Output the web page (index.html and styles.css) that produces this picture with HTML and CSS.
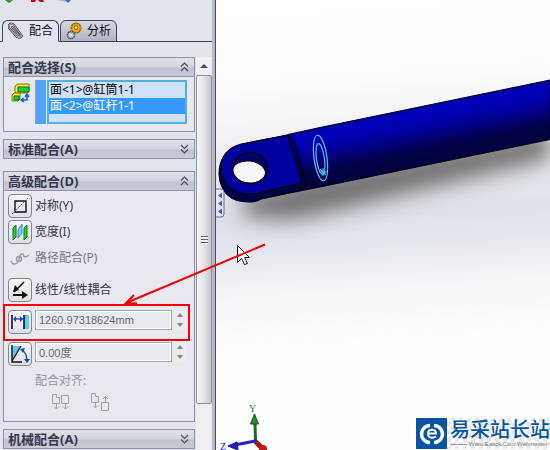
FILE: index.html
```html
<!DOCTYPE html>
<html lang="zh-CN">
<head>
<meta charset="utf-8">
<title>配合</title>
<link rel="stylesheet" href="styles.css">
</head>
<body>
<div class="app">
  <aside class="panel">
    <div class="toolbar">
      <svg width="90" height="6" viewBox="0 0 90 6" aria-hidden="true">
        <path d="M5 0h8L9 3z" fill="#555"/><path d="M6 0h6L9 2z" fill="#0c0"/>
        <path d="M31 0h5l-1 2h-4zM38 0h5l1 2h-4z" fill="#d00010"/>
        <path d="M57 0h12l-3 2z" fill="#aeb6cf"/><path d="M65 0h6l-3 3z" fill="#3867d6"/>
      </svg>
    </div>
    <div class="tabs" role="tablist">
      <button class="tab tab-active" role="tab" aria-selected="true">
        <svg width="16" height="18" viewBox="0 0 16 18" aria-hidden="true">
          <g fill="none" stroke-linecap="round"><path d="M4 9 9 15q3 2 5-1L6 3Q3 0 1 3v3l8 9M4 5l7 8" stroke="#3c3c3c" stroke-width="2"/><path d="M4 9 9 15q3 2 5-1L6 3Q3 0 1 3v3l8 9M4 5l7 8" stroke="#b8b8b8" stroke-width="1"/></g>
        </svg>配合</button>
      <button class="tab" role="tab" aria-selected="false">
        <svg width="16" height="18" viewBox="0 0 16 18" aria-hidden="true">
          <circle cx="10" cy="6" r="4.7" fill="#f5ae18" stroke="#8b5600" stroke-width="1.6"/><circle cx="10" cy="6" r="4.7" fill="none" stroke="#f5ae18" stroke-dasharray="1.500 1.500"/><circle cx="10" cy="5.500" r="1.800" fill="#fff0a0" stroke="#8b5600"/>
          <circle cx="5" cy="13" r="3.600" fill="#c4cbd8" stroke="#333c4c" stroke-width="1.500"/><circle cx="5" cy="13" r="3.600" fill="none" stroke="#c4cbd8" stroke-dasharray="1.200 1.200"/><circle cx="5" cy="13" r="1" fill="#fff"/>
        </svg>分析</button>
    </div>
    <div class="panel-body">
      <div class="sections">
        <section class="group">
          <button class="group-head" aria-expanded="true">配合选择(S)<svg class="chev" viewBox="0 0 9 10"><path d="m1 4.500 3.500-3.500L8 4.500M1 9l3.500-3.500L8 9"/></svg></button>
          <div class="select-row">
            <svg width="20" height="20" viewBox="0 0 20 20" aria-hidden="true">
              <path d="m4 3 3-2h11v7l-2 2H4z" fill="#f7e632" stroke="#887800"/><path d="M7 4h11v5H7z" fill="#20cf38" stroke="#087518"/>
              <path d="m1 12 2-2h6v6l-2 2H1z" fill="#f7e632" stroke="#887800"/><path d="M3 13h5v4H3z" fill="#20cf38" stroke="#087518"/>
              <path d="M11 17h5v-5M13 15l-3 2 3 2M14 14l2-3 2 3" fill="none" stroke="#205cd8" stroke-width="1.500"/>
            </svg>
            <div class="pick">
              <span class="pick-bar"></span>
              <ul class="list" role="listbox" aria-label="配合选择">
                <li role="option" aria-selected="false">面&lt;1&gt;@缸筒1-1</li>
                <li role="option" aria-selected="true" class="chosen">面&lt;2&gt;@缸杆1-1</li>
              </ul>
            </div>
          </div>
        </section>
        <section class="group closed">
          <button class="group-head" aria-expanded="false">标准配合(A)<svg class="chev" viewBox="0 0 9 10"><path d="m1 1 3.500 3.500L8 1M1 5.500 4.500 9 8 5.500"/></svg></button>
        </section>
        <section class="group">
          <button class="group-head" aria-expanded="true">高级配合(D)<svg class="chev" viewBox="0 0 9 10"><path d="m1 4.500 3.500-3.500L8 4.500M1 9l3.500-3.500L8 9"/></svg></button>
          <div class="mates">
            <div class="mate">
              <button class="icon-btn" id="b-sym" aria-labelledby="l-sym"><svg viewBox="0 0 20 20"><path d="M5 5h11v11H5z" fill="none" stroke="#111" stroke-width="1.400"/><path d="M2 18 18 2" stroke="#2a62d8" stroke-dasharray="2 1"/></svg></button>
              <label id="l-sym" for="b-sym">对称(Y)</label>
            </div>
            <div class="mate">
              <button class="icon-btn" id="b-wid" aria-labelledby="l-wid"><svg viewBox="0 0 20 20"><path d="m3 6 3-3v12l-3 3zM14 6l3-3v12l-3 3z" fill="#2ccc3b" stroke="#07781a"/><path d="m8 8 4-6v9l-4 5z" fill="#76d4fa" stroke="#3e83c5"/></svg></button>
              <label id="l-wid" for="b-wid">宽度(I)</label>
            </div>
            <div class="mate muted">
              <button class="icon-btn flat" id="b-path" aria-labelledby="l-path" disabled><svg viewBox="0 0 20 20"><g fill="none" stroke="#9a9aa2" stroke-width="1.400"><path d="M1 13q2 5 6 2c4-3 1-10 6-9q1 5 6 1"/><circle cx="9" cy="11" r="2.500"/></g></svg></button>
              <label id="l-path" for="b-path">路径配合(P)</label>
            </div>
            <div class="mate spaced">
              <button class="icon-btn" id="b-lin" aria-labelledby="l-lin"><svg viewBox="0 0 20 20"><path d="M14 2 4 12" stroke="#111" stroke-width="1.600"/><path d="m3 12 2-7 4 5zM18 15l-6-4v8z" fill="#111"/><path d="M3 15h11" stroke="#111" stroke-width="2"/></svg></button>
              <label id="l-lin" for="b-lin">线性/线性耦合</label>
            </div>
            <div class="mate spaced">
              <button class="icon-btn" aria-label="距离"><svg viewBox="0 0 20 20"><path d="M14 3h5v14h-5z" fill="#61cbed"/><path d="M2 3v14M14 3v14" stroke="#111" stroke-width="1.600"/><path d="M4 7h9" stroke="#1648c4" stroke-width="1.400"/><path d="m3 7 3-3v6zM13 7l-3-3v6z" fill="#1648c4"/></svg></button>
              <div class="field"><input type="text" size="1" value="1260.97318624mm" aria-label="距离值"><span class="spin"><button aria-label="增加距离"></button><button class="down" aria-label="减少距离"></button></span></div>
            </div>
            <div class="mate spaced">
              <button class="icon-btn" aria-label="角度"><svg viewBox="0 0 20 20"><path d="M2 2h9L2 18z" fill="#61cbed"/><path d="M2 1v17h10M2 17 11 2" fill="none" stroke="#111" stroke-width="1.400"/><path d="M12 6q5 3 5 11" fill="none" stroke="#1648c4" stroke-width="1.400"/><path d="m10 5 5-1-2 5zM14 15h6l-3 4z" fill="#1648c4"/></svg></button>
              <div class="field"><input type="text" size="1" value="0.00度" aria-label="角度值"><span class="spin"><button aria-label="增加角度"></button><button class="down" aria-label="减少角度"></button></span></div>
            </div>
            <div class="align">
              <span>配合对齐:</span>
              <div class="align-icons">
                <button disabled aria-label="同向对齐"><svg width="19" height="18" viewBox="0 0 19 18"><g fill="none" stroke="#a2a2a9"><path d="M1.500 10.500v-9h4v3h3v6zM10.500 2.500h7v8h-7z"/><path d="M5.500 10v6M3 13.500l2.500 2.500L8 13.500M14.500 10v6M12 13.500l2.500 2.500 2.500-2.500"/></g></svg></button>
                <button disabled aria-label="反向对齐"><svg width="19" height="18" viewBox="0 0 19 18"><g fill="none" stroke="#a2a2a9"><path d="M1.500 9.500v-9h4v3h3v6zM11.500 9.500h7v8h-7z"/><path d="M5.500 9v6M3 12.500l2.500 2.500L8 12.500M15.500 9V3.500M13 6l2.500-2.500L18 6"/></g></svg></button>
              </div>
            </div>
          </div>
          <div class="highlight"></div>
        </section>
        <section class="group closed">
          <button class="group-head" aria-expanded="false">机械配合(A)<svg class="chev" viewBox="0 0 9 10"><path d="m1 1 3.500 3.500L8 1M1 5.500 4.500 9 8 5.500"/></svg></button>
        </section>
      </div>
      <div class="scrollbar"><span class="scroll-up"></span><span class="thumb"><i></i></span></div>
    </div>
  </aside>
  <main class="view">
    <svg class="scene" viewBox="216 0 334 450" preserveAspectRatio="xMinYMin slice" role="img" aria-label="三维模型">
      <defs>
        <linearGradient id="sky" gradientUnits="userSpaceOnUse" x1="340" y1="0" x2="370" y2="450">
          <stop offset="0" stop-color="#fff"/><stop offset=".18" stop-color="#fcfcfd"/><stop offset=".34" stop-color="#ededf2"/><stop offset=".48" stop-color="#dde1ea"/><stop offset=".54" stop-color="#e3e6ee"/><stop offset=".64" stop-color="#f4f5f8"/><stop offset=".76" stop-color="#fefefe"/>
        </linearGradient>
        <linearGradient id="rod" gradientUnits="userSpaceOnUse" x1="320" y1="128" x2="332" y2="186">
          <stop offset="0" stop-color="#0000a8"/><stop offset=".12" stop-color="#0000bc"/><stop offset=".3" stop-color="#0000a8"/><stop offset=".52" stop-color="#000078"/><stop offset=".74" stop-color="#000044"/><stop offset="1" stop-color="#00003c"/>
        </linearGradient>
        <filter id="soft" x="-20%" y="-60%" width="140%" height="220%"><feGaussianBlur stdDeviation="11"/></filter>
        <clipPath id="hole"><ellipse cx="250" cy="168" rx="17.500" ry="15.500"/></clipPath>
      </defs>
      <path d="M216 0h334v450H216z" fill="url(#sky)"/>
      <path d="m240 197 80-20 230-48v30L340 209l-50 11-45-4z" fill="#606062" opacity=".9" filter="url(#soft)"/>
      <path d="m288 134.500 32-7L550 80v59.500L320 187l-60 12z" fill="url(#rod)" stroke="#000010"/>
      <path d="M288 135 247 143Q219 149 219 174q2 28 30 28 7 0 12-3l43-10 2-9z" fill="#000048" stroke="#000010" stroke-width="1.200"/>
      <path fill-rule="evenodd" d="M288 135 247 143C227 145 218 159 222 174q6 24 35 19l45-10zM267.500 168a17.500 15.500 0 1 1-35 0 17.500 15.500 0 1 1 35 0" fill="#00009f" stroke="#000010" stroke-width="1.200"/>
      <g clip-path="url(#hole)"><path d="M230 150h40v35h-40z" fill="#000068"/><ellipse cx="249" cy="172" rx="16.500" ry="11" fill="#f7f7fb" stroke="#000" transform="rotate(7 249 172)"/></g>
      <ellipse cx="250" cy="168" rx="17.500" ry="15.500" fill="none" stroke="#000010" stroke-width="1.200"/>
      <path d="M288 135q12 6 14 48z" fill="#000058" stroke="#000010"/>
      <path d="m259 198 5-6 38-9" fill="none" stroke="#000010"/>
      <g fill="none" stroke="#58bfff" stroke-width="1.200"><ellipse cx="320.500" cy="158" rx="6.500" ry="23" transform="rotate(-8 320.500 158)"/><ellipse cx="320.500" cy="159" rx="4" ry="15.500" transform="rotate(-8 320.500 159)"/><path d="M319 172h8M323 168v8M320 169l6 6"/></g>
      <path d="M214 189h7q3 0 3 3v22q0 3-3 3h-7" fill="#e4e6f1" stroke="#666b8b"/>
      <path d="m218 195.500 4-3v6zM218 203.500l4-3v6zM218 211.500l4-3v6z" fill="#5157a0"/>
      <g stroke-linecap="round"><path d="m256 442 9 9" stroke="#a31515" stroke-width="5"/><path d="m255.500 440-.5-16" stroke="#176d20" stroke-width="3"/><path d="m255 441-20 4" stroke="#2222c8" stroke-width="3"/></g>
      <path d="m254.500 414-4 10h8z" fill="#2c8a38" stroke="#125419"/><path d="m228 446 9-4 1 8z" fill="#2424d0" stroke="#111180"/><circle cx="263" cy="449" r="4" fill="#c31818"/>
      <text x="249" y="412" class="axis axis-y">Y</text><text x="220" y="450" class="axis axis-z">Z</text>
    </svg>
    <div class="brand">
      <svg class="brand-logo" viewBox="0 0 31 31" aria-hidden="true"><path d="M0 0h31v31H0z" fill="#0754a4"/><path d="M14 7.500a8.500 8.500 0 0 0 0 17M18 7.500a8.500 8.500 0 0 1 0 17" fill="none" stroke="#fff" stroke-width="3.500"/><path d="M12 15.500h8c0-5-8-5-8 0 0 5 5 5 8 3" fill="none" stroke="#fff" stroke-width="1.800"/></svg>
      <div class="brand-text"><strong>易采站长站</strong><small>Www.Easck.Com Webmaster</small></div>
    </div>
  </main>
  <svg class="pointer" width="270" height="310" viewBox="0 0 270 310" aria-hidden="true">
    <path d="M237.500 245.500v17l4-4 3 6 3-1-3-6h5z" fill="#fff" stroke="#151528"/>
    <path d="M265 244.500 126 303M134 295 126 303l11 .5" fill="none" stroke="#fb0000" stroke-width="2"/>
  </svg>
</div>
</body>
</html>
```
FILE: styles.css
```css
* { box-sizing: border-box; }
body {
  margin: 0;
  overflow: hidden;
  font: 12px/16px "Noto Sans", "Noto Sans CJK SC", sans-serif;
  color: #34384c;
}
button { font: inherit; color: inherit; padding: 0; border: 0; background: none; }
svg { display: block; flex: none; }

.app { position: relative; display: flex; height: 100vh; overflow: hidden; }
.panel {
  display: flex;
  flex-direction: column;
  flex: 0 0 216px;
  min-width: 0;
  background: #e1e4ec;
  border-right: 1px solid #484c63;
  box-shadow: inset -3px 0 #b5b9ca;
}
.toolbar { height: 20px; flex: none; }
.tabs {
  display: flex;
  flex: none;
  align-items: stretch;
  gap: 1px;
  height: 22px;
  padding-left: 2px;
  margin-right: 3px;
  box-shadow: inset 0 -1px #3d435a;
}
.tab {
  display: flex;
  align-items: center;
  gap: 5px;
  width: 57px;
  padding-left: 5px;
  color: #11131c;
  border: 1px solid #3d435a;
  border-radius: 6px 6px 0 0;
  background: linear-gradient(#d6d8e1, #aeb2c2);
}
.tab-active { background: #e1e4ec; border-bottom-color: #e1e4ec; }

.panel-body { display: flex; flex: 1; min-height: 0; padding: 15px 3px 0 3px; }
.sections { flex: 1; min-width: 0; }
.group {
  position: relative;
  border: 1px solid #8f93a5;
  background: #e7e8f0;
  margin-bottom: 7px;
}
.closed { margin-bottom: 12px; }
.group-head {
  display: flex;
  align-items: center;
  justify-content: space-between;
  width: 100%;
  height: 19px;
  padding: 0 5px 0 4px;
  font-size: 13px;
  line-height: 18px;
  font-weight: 700;
  border-bottom: 1px solid #8f93a5;
  background: linear-gradient(#dfe1e7, #d2d5dd 50%, #bfc4d0 55%, #c7cbd6);
}
.closed .group-head { height: 18px; border-bottom: 0; }
.chev { width: 9px; height: 10px; fill: none; stroke: #4b4f5e; stroke-width: 1.2; }

.select-row { display: flex; gap: 4px; padding: 3px 7px 7px; }
.select-row > svg { margin: 3px 0; }
.pick { display: flex; flex: 1; gap: 1px; }
.pick-bar { width: 11px; background: #51a3fb; border-left: 1px solid #a2a4ad; }
.list {
  flex: 1;
  height: 44px;
  margin: 0;
  padding: 0;
  list-style: none;
  color: #000;
  border: 2px solid #56afe0;
  background: #cfe2f5;
}
.list li { padding-left: 1px; }
.list .chosen { color: #fff; background: #3399ff; }

.mates { padding: 3px 4px 10px; }
.mate { display: flex; align-items: center; gap: 3px; height: 24px; margin-bottom: 2px; }
.spaced { margin-top: 8px; }
.muted { color: #777985; }
.icon-btn {
  flex: none;
  width: 24px;
  height: 24px;
  padding: 1px;
  border: 1px solid #85878f;
  border-radius: 4px;
  background: linear-gradient(#f7f7f9, #dfe0e6);
}
.icon-btn svg { width: 20px; height: 20px; }
.flat { border-color: transparent; background: none; }
.field { display: flex; align-self: flex-start; flex: 1; gap: 2px; min-width: 0; padding-right: 4px; }
.field input {
  flex: 1;
  min-width: 0;
  height: 20px;
  padding: 0 3px;
  font: 11px/16px "Liberation Sans", "Noto Sans CJK SC", sans-serif;
  color: #696969;
  border: 1px solid #a7a9b0;
  border-radius: 0;
  background: #e9eaf1;
  box-shadow: inset 0 0 0 1px #fff;
}
.spin { display: grid; width: 12px; height: 20px; background: #ededf0; }
.spin button { display: grid; place-items: center; }
.spin button::before { content: ""; border: 3px solid transparent; border-top: 0; border-bottom: 4px solid #858588; }
.spin .down::before { border-top: 4px solid #858588; border-bottom: 0; }
.align { padding: 5px 0 0 27px; color: #96969f; }
.align-icons { display: flex; gap: 20px; padding: 4px 0 0 16px; }
.highlight {
  position: absolute;
  top: 132px;
  left: -1px;
  right: 4px;
  height: 37px;
  border: 2px solid #f80000;
}

.scrollbar {
  display: flex;
  flex-direction: column;
  width: 16px;
  margin-left: 1px;
  background: #efeff1;
}
.scroll-up { display: grid; place-items: center; height: 18px; }
.scroll-up::before { content: ""; border: 4px solid transparent; border-top: 0; border-bottom-color: #484a52; }
.thumb {
  display: grid;
  place-items: center;
  height: 329px;
  border: 1px solid #92949b;
  border-radius: 2px;
  background: linear-gradient(90deg, #f7f7f8, #e2e2e6 55%, #c4c5ca);
}
.thumb i { width: 7px; height: 8px; background: repeating-linear-gradient(#5b5c64 0 1px, #f4f4f5 1px 3px); }

.view { position: relative; flex: 1; min-width: 0; }
.scene { width: 100%; height: 100%; }
.axis { font: 10px "Liberation Serif", serif; }
.axis-y { fill: #168322; }
.axis-z { fill: #2222c8; }
.brand { position: absolute; right: 0; bottom: 1px; display: flex; color: #0754a4; }
.brand-logo { width: 31px; height: 31px; }
.brand-text {
  width: 103px;
  padding-left: 3px;
  white-space: nowrap;
  background: repeating-conic-gradient(#e8e8e8 0 25%, #fff 0 50%) 0 0 / 8px 8px;
}
.brand-text strong { display: block; font: 500 20px/22px "Noto Sans CJK SC", sans-serif; }
.brand-text small {
  display: flex;
  align-items: center;
  gap: 2px;
  font: 6px/9px "Liberation Sans", sans-serif;
  color: #777;
}
.brand-text small::before { content: ""; width: 17px; height: 1px; background: #999; }
.pointer { position: absolute; left: 0; top: 0; pointer-events: none; }
```
